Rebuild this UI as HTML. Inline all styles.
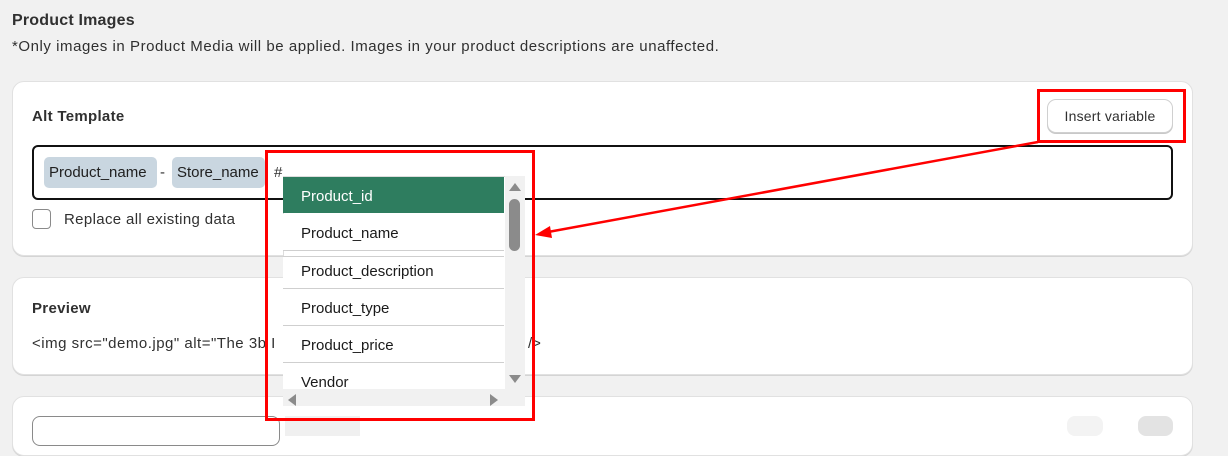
<!DOCTYPE html>
<html><head><meta charset="utf-8"><style>
*{box-sizing:border-box;margin:0;padding:0}
body{width:1228px;height:428px;overflow:hidden;background:#f1f1f1;font-family:"Liberation Sans",sans-serif;color:#303030;position:relative;font-size:14px}
.a{position:absolute;white-space:nowrap}
.card{position:absolute;left:12px;width:1181px;background:#fff;border:1px solid #e1e1e1;border-radius:12px;box-shadow:0 1px 0 #d4d4d4}
.b{font-weight:bold;color:#303030}
.chip{position:absolute;top:157px;height:31px;background:#c9d6e0;border-radius:5px;font-size:15px;line-height:31px;padding-left:5px;color:#202020}
.item{position:absolute;left:283px;width:221px;height:37px;border-bottom:1px solid #cfcfcf;font-size:15px;line-height:39px;padding-left:18px;color:#1a1a1a;background:#fff}
</style></head><body>
<div class="a b" style="left:12px;top:12px;font-size:16px;letter-spacing:0.2px">Product Images</div>
<div class="a" style="left:12px;top:38px;font-size:15px;letter-spacing:0.55px;color:#303030">*Only images in Product Media will be applied. Images in your product descriptions are unaffected.</div>

<div class="card" style="top:81px;height:175px"></div>
<div class="a b" style="left:32px;top:108px;font-size:15px;letter-spacing:0.3px">Alt Template</div>
<div class="a" style="left:1047px;top:99px;width:126px;height:34px;border:1px solid #d0d0d0;border-radius:9px;background:#fff;box-shadow:0 1px 0 #c8c8c8;font-size:14px;line-height:32px;text-align:center;color:#303030;letter-spacing:0.2px">Insert variable</div>
<div class="a" style="left:32px;top:145px;width:1141px;height:55px;border:2px solid #111;border-radius:6px;background:#fff"></div>
<div class="chip" style="left:44px;width:113px">Product_name</div>
<div class="a" style="left:160px;top:164px;font-size:15px">-</div>
<div class="chip" style="left:172px;width:93px">Store_name</div>
<div class="a" style="left:274px;top:164px;font-size:15px">#</div>
<div class="a" style="left:32px;top:209px;width:19px;height:20px;border:1px solid #8a8a8a;border-radius:4px;background:#fff"></div>
<div class="a" style="left:64px;top:211px;font-size:15px;letter-spacing:0.35px;color:#303030">Replace all existing data</div>

<div class="card" style="top:277px;height:98px"></div>
<div class="a b" style="left:32px;top:300px;font-size:15px;letter-spacing:0.3px">Preview</div>
<div class="a" style="left:32px;top:335px;font-size:15px;letter-spacing:0.5px">&lt;img src="demo.jpg" alt="The 3b I</div>
<div class="a" style="left:528px;top:335px;font-size:15px">/&gt;</div>

<div class="card" style="top:396px;height:60px"></div>
<div class="a" style="left:32px;top:416px;width:248px;height:30px;border:1px solid #8a8a8a;border-radius:8px;background:#fff"></div>
<div class="a" style="left:285px;top:416px;width:75px;height:20px;background:#f0f0f0"></div>
<div class="a" style="left:1067px;top:416px;width:36px;height:20px;background:#f3f3f3;border-radius:8px"></div>
<div class="a" style="left:1138px;top:416px;width:35px;height:20px;background:#e3e3e3;border-radius:8px"></div>

<!-- dropdown -->
<div class="a" style="left:283px;top:176px;width:242px;height:230px;background:#fff;border:1px solid #ddd"></div>
<div class="item" style="top:177px;height:36px;background:#2e7d5f;color:#fff;border:none">Product_id</div>
<div class="item" style="top:214px">Product_name</div>
<div class="a" style="left:283px;top:256px;width:221px;height:1px;background:#cfcfcf"></div>
<div class="item" style="top:257px;height:32px;line-height:30px">Product_description</div>
<div class="item" style="top:289px">Product_type</div>
<div class="item" style="top:326px">Product_price</div>
<div class="item" style="top:363px;height:26px;border:none;line-height:40px;overflow:hidden">Vendor</div>
<div class="a" style="left:283px;top:389px;width:242px;height:17px;background:#f1f1f1"></div>
<div class="a" style="left:505px;top:176px;width:20px;height:213px;background:#f1f1f1"></div>
<div class="a" style="left:509px;top:199px;width:11px;height:52px;background:#8b8b8b;border-radius:6px"></div>
<svg class="a" style="left:0;top:0" width="1228" height="428">
<polygon points="509,191 515,183 521,191" fill="#8b8b8b"/>
<polygon points="509,375 515,383 521,375" fill="#8b8b8b"/>
<polygon points="296,394 288,400 296,406" fill="#8b8b8b"/>
<polygon points="490,394 498,400 490,406" fill="#8b8b8b"/>
<rect x="266.5" y="151.5" width="267" height="268" fill="none" stroke="#f00" stroke-width="3"/>
<rect x="1038.5" y="90.5" width="146" height="51" fill="none" stroke="#f00" stroke-width="3"/>
<line x1="1038" y1="142" x2="548" y2="232" stroke="#f00" stroke-width="2.5"/>
<polygon points="535,235 550,226 552,238" fill="#f00"/>
</svg>
</body></html>
